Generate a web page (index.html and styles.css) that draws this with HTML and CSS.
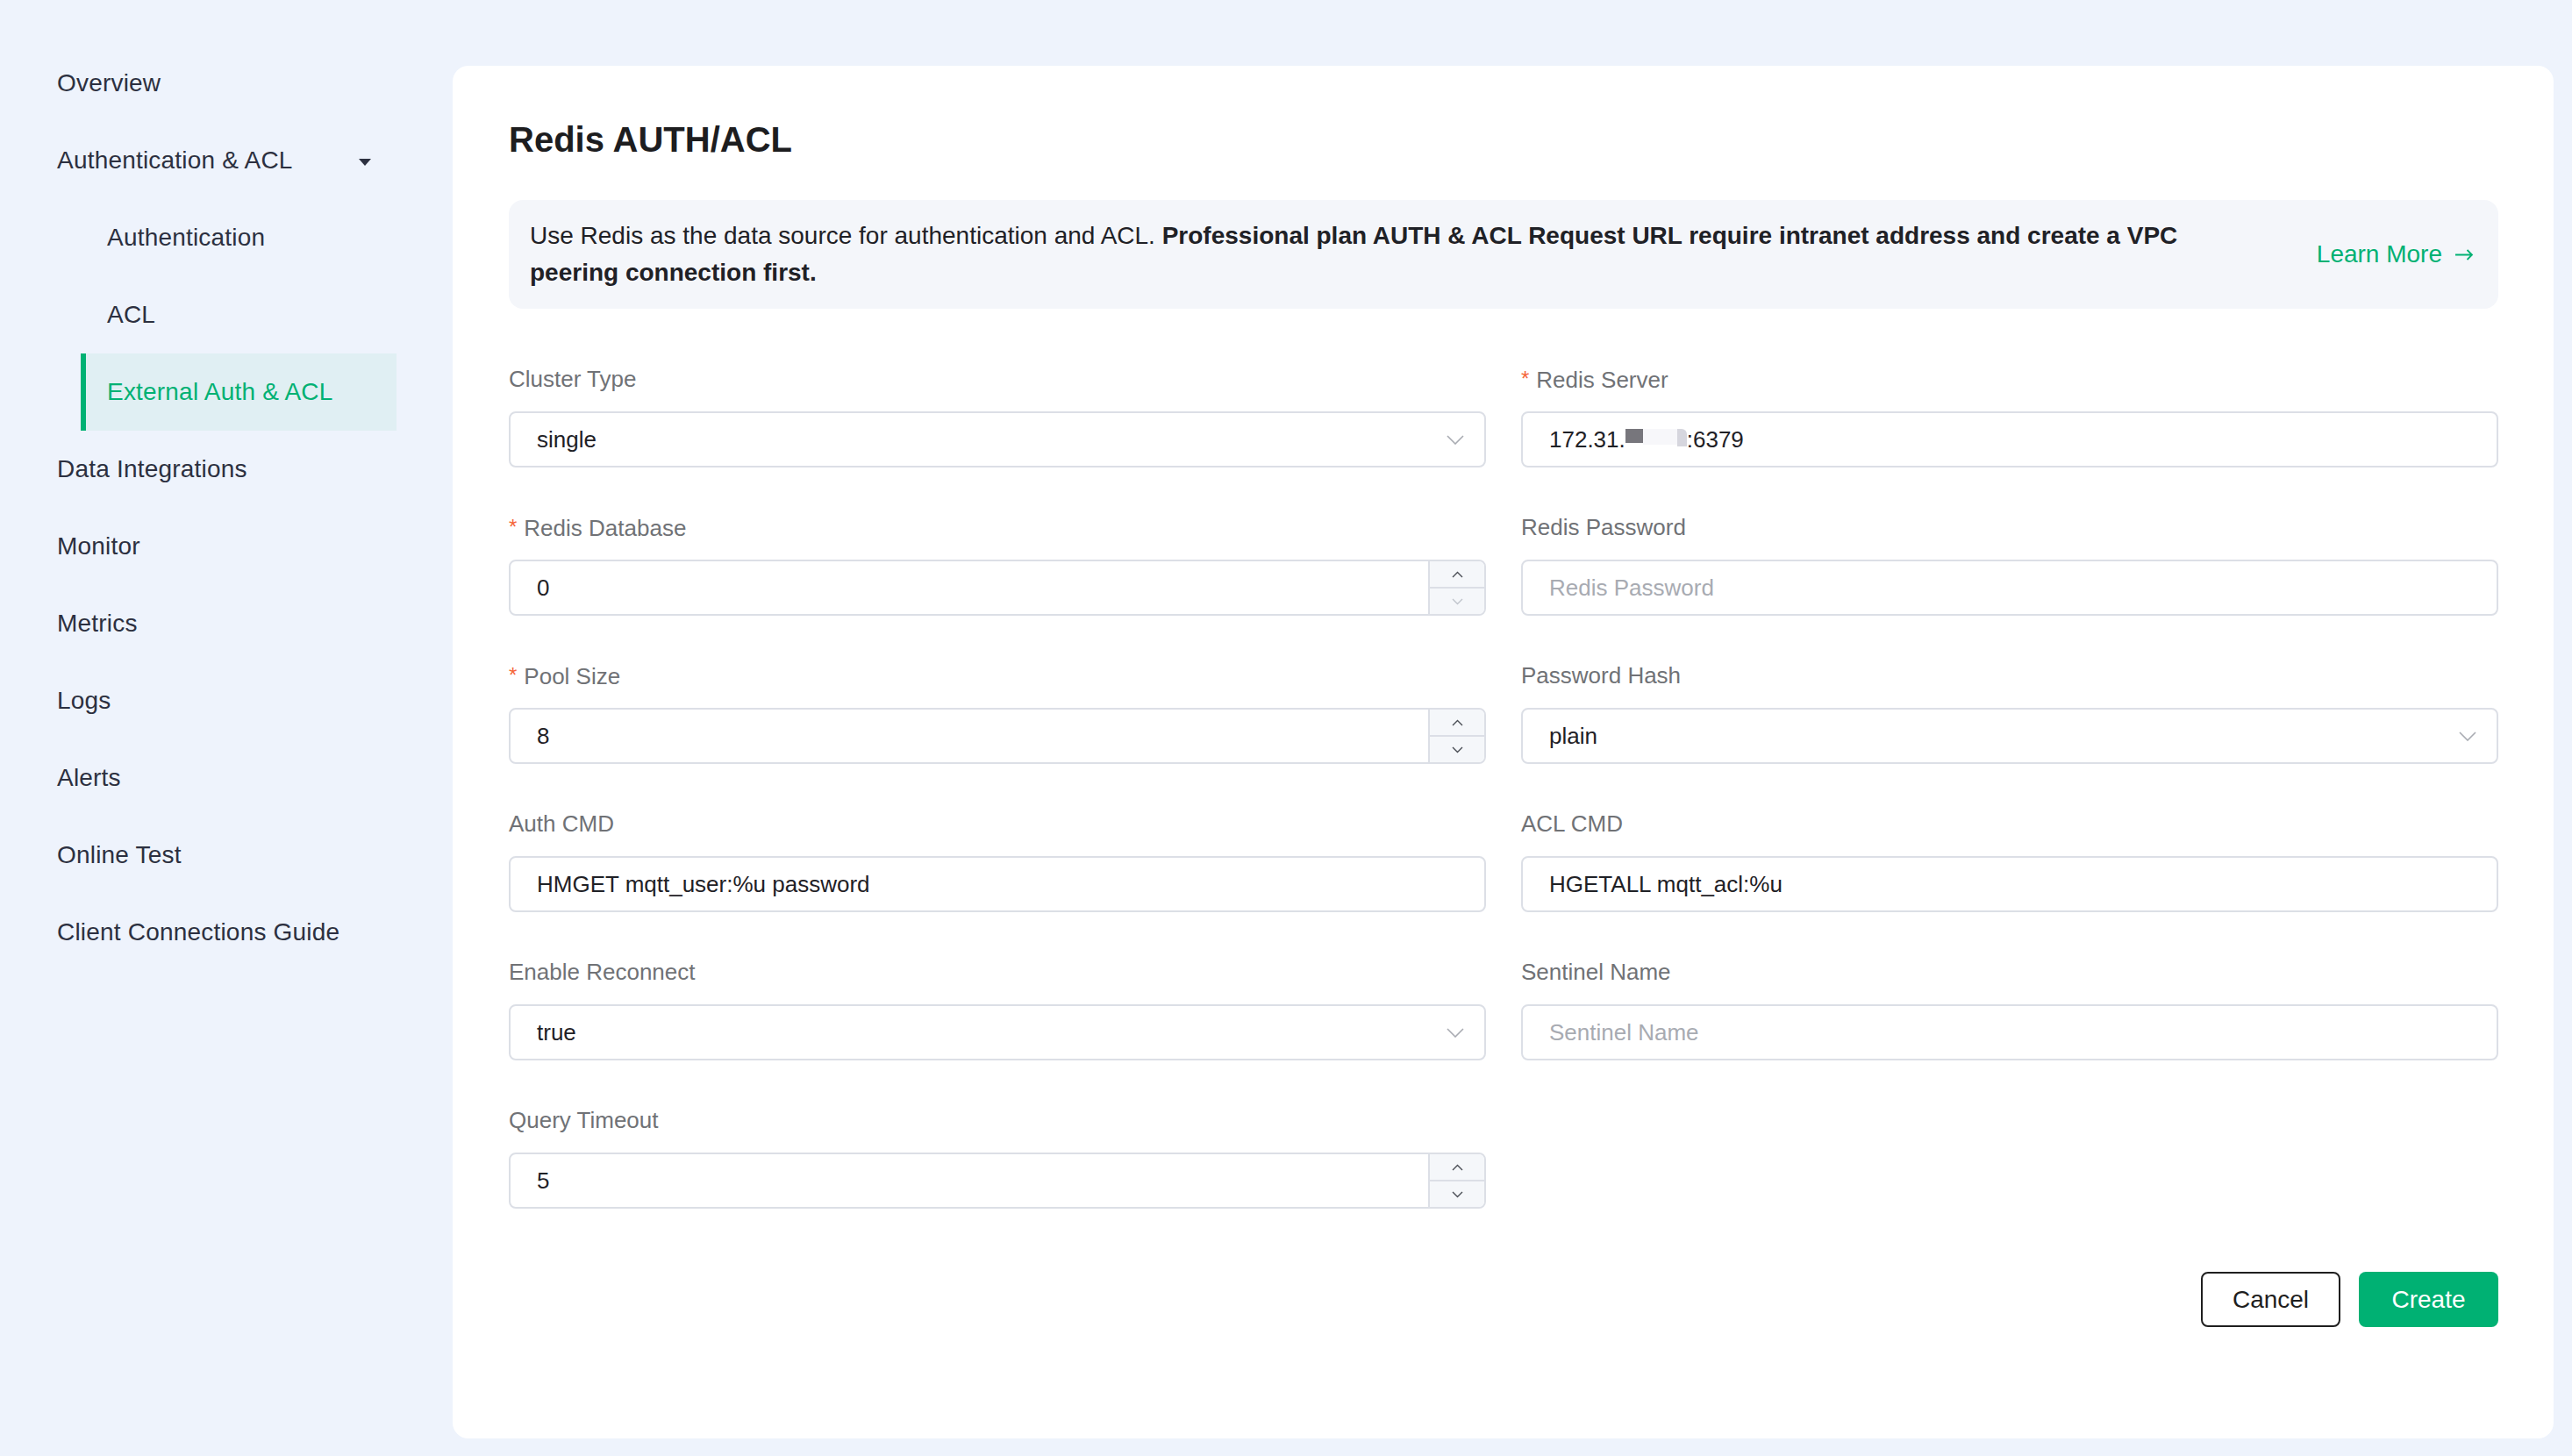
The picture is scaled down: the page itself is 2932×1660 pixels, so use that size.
FILE: index.html
```html
<!DOCTYPE html>
<html lang="en">
<head>
<meta charset="utf-8">
<title>Redis AUTH/ACL</title>
<link rel="stylesheet" href="styles.css">
</head>
<body>
<div class="layout">
  <aside class="sidebar">
    <nav class="nav">
      <div class="nav-item"><span>Overview</span></div>
      <div class="nav-item"><span>Authentication &amp; ACL</span>
        <svg class="caret" width="14" height="8" viewBox="0 0 14 8"><polygon points="0,0 14,0 7,8" fill="#2c3040"/></svg>
      </div>
      <div class="nav-sub"><span>Authentication</span></div>
      <div class="nav-sub"><span>ACL</span></div>
      <div class="nav-sub active"><span>External Auth &amp; ACL</span></div>
      <div class="nav-item"><span>Data Integrations</span></div>
      <div class="nav-item"><span>Monitor</span></div>
      <div class="nav-item"><span>Metrics</span></div>
      <div class="nav-item"><span>Logs</span></div>
      <div class="nav-item"><span>Alerts</span></div>
      <div class="nav-item"><span>Online Test</span></div>
      <div class="nav-item"><span>Client Connections Guide</span></div>
    </nav>
  </aside>
  <main class="main">
    <section class="card">
      <h1 class="title">Redis AUTH/ACL</h1>
      <div class="info">
        <p class="info-text">Use Redis as the data source for authentication and ACL. <b>Professional plan AUTH &amp; ACL Request URL require intranet address and create a VPC peering connection first.</b></p>
        <a class="learn">Learn More
          <svg width="22" height="20" viewBox="0 0 22 20"><path d="M1 10.5H20M14.5 5L20 10.5L14.5 16" fill="none" stroke="#00b173" stroke-width="1.8"/></svg>
        </a>
      </div>
      <div class="form">
        <div class="field">
          <label class="label">Cluster Type</label>
          <div class="input select"><span class="val">single</span>
            <svg class="chev" width="20" height="11" viewBox="0 0 20 11"><polyline points="1,1 10,10 19,1" fill="none" stroke="#a8abb2" stroke-width="1.6"/></svg>
          </div>
        </div>
        <div class="field">
          <label class="label"><span class="req">*</span>Redis Server</label>
          <div class="input"><span class="val">172.31.<span class="blur-dark"></span><span class="blur-light"></span><span class="blur-mid"></span>:6379</span></div>
        </div>
        <div class="field">
          <label class="label"><span class="req">*</span>Redis Database</label>
          <div class="input number"><span class="val">0</span>
            <div class="stepper">
              <div class="step"><svg width="13" height="8" viewBox="0 0 13 8"><polyline points="1,7 6.5,1.5 12,7" fill="none" stroke="#4a4d55" stroke-width="1.4"/></svg></div>
              <div class="step"><svg width="13" height="8" viewBox="0 0 13 8"><polyline points="1,1 6.5,6.5 12,1" fill="none" stroke="#c0c4cc" stroke-width="1.4"/></svg></div>
            </div>
          </div>
        </div>
        <div class="field">
          <label class="label">Redis Password</label>
          <div class="input"><span class="ph">Redis Password</span></div>
        </div>
        <div class="field">
          <label class="label"><span class="req">*</span>Pool Size</label>
          <div class="input number"><span class="val">8</span>
            <div class="stepper">
              <div class="step"><svg width="13" height="8" viewBox="0 0 13 8"><polyline points="1,7 6.5,1.5 12,7" fill="none" stroke="#4a4d55" stroke-width="1.4"/></svg></div>
              <div class="step"><svg width="13" height="8" viewBox="0 0 13 8"><polyline points="1,1 6.5,6.5 12,1" fill="none" stroke="#4a4d55" stroke-width="1.4"/></svg></div>
            </div>
          </div>
        </div>
        <div class="field">
          <label class="label">Password Hash</label>
          <div class="input select"><span class="val">plain</span>
            <svg class="chev" width="20" height="11" viewBox="0 0 20 11"><polyline points="1,1 10,10 19,1" fill="none" stroke="#a8abb2" stroke-width="1.6"/></svg>
          </div>
        </div>
        <div class="field">
          <label class="label">Auth CMD</label>
          <div class="input"><span class="val">HMGET mqtt_user:%u password</span></div>
        </div>
        <div class="field">
          <label class="label">ACL CMD</label>
          <div class="input"><span class="val">HGETALL mqtt_acl:%u</span></div>
        </div>
        <div class="field">
          <label class="label">Enable Reconnect</label>
          <div class="input select"><span class="val">true</span>
            <svg class="chev" width="20" height="11" viewBox="0 0 20 11"><polyline points="1,1 10,10 19,1" fill="none" stroke="#a8abb2" stroke-width="1.6"/></svg>
          </div>
        </div>
        <div class="field">
          <label class="label">Sentinel Name</label>
          <div class="input"><span class="ph">Sentinel Name</span></div>
        </div>
        <div class="field">
          <label class="label">Query Timeout</label>
          <div class="input number"><span class="val">5</span>
            <div class="stepper">
              <div class="step"><svg width="13" height="8" viewBox="0 0 13 8"><polyline points="1,7 6.5,1.5 12,7" fill="none" stroke="#4a4d55" stroke-width="1.4"/></svg></div>
              <div class="step"><svg width="13" height="8" viewBox="0 0 13 8"><polyline points="1,1 6.5,6.5 12,1" fill="none" stroke="#4a4d55" stroke-width="1.4"/></svg></div>
            </div>
          </div>
        </div>
      </div>
      <div class="actions">
        <button class="btn btn-cancel">Cancel</button>
        <button class="btn btn-create">Create</button>
      </div>
    </section>
  </main>
</div>
</body>
</html>
```

FILE: styles.css
```css
* { box-sizing: border-box; }
html, body {
  margin: 0;
  padding: 0;
}
body {
  width: 2932px;
  height: 1660px;
  overflow: hidden;
  background: #eef3fc;
  font-family: "Liberation Sans", Arial, Helvetica, sans-serif;
  color: #1f2126;
}
.layout {
  display: flex;
  height: 1660px;
}
.sidebar {
  width: 516px;
  flex-shrink: 0;
  padding-top: 51px;
}
.nav {
  width: 452px;
  display: flex;
  flex-direction: column;
}
.nav-item, .nav-sub {
  height: 88px;
  display: flex;
  align-items: center;
  font-size: 28px;
  letter-spacing: 0.2px;
  color: #2c3040;
}
.nav-item {
  padding: 0 29px 0 65px;
}
.caret {
  margin-left: auto;
  margin-top: 4px;
}
.nav-sub {
  margin-left: 92px;
  padding-left: 24px;
  border-left: 6px solid transparent;
}
.nav-sub.active {
  background: #e0eff3;
  border-left-color: #00b173;
  color: #00b173;
}
.main {
  flex: 1;
  padding: 75px 21px 20px 0;
}
.card {
  background: #ffffff;
  border-radius: 18px;
  height: 1565px;
  padding: 60px 63px 0 64px;
}
.title {
  margin: 0;
  font-size: 40px;
  line-height: 48px;
  font-weight: 700;
  color: #1d1d1f;
}
.info {
  margin-top: 45px;
  height: 124px;
  background: #f4f6fa;
  border-radius: 16px;
  padding: 0 28px 0 24px;
  display: flex;
  align-items: center;
  gap: 110px;
}
.info-text {
  flex: 1;
  margin: 0;
  font-size: 28px;
  line-height: 42px;
  color: #1f2126;
}
.info-text b { font-weight: 700; }
.learn {
  display: flex;
  align-items: center;
  gap: 14px;
  font-size: 28px;
  color: #00b173;
  white-space: nowrap;
}
.form {
  margin-top: 62px;
  display: grid;
  grid-template-columns: 1fr 1fr;
  column-gap: 40px;
  row-gap: 50px;
}
.field {
  display: flex;
  flex-direction: column;
}
.label {
  height: 36px;
  line-height: 36px;
  font-size: 26px;
  color: #707276;
  margin-bottom: 19px;
}
.req {
  color: #f5663a;
  font-size: 24px;
  margin-right: 8px;
  vertical-align: 2px;
}
.input {
  height: 64px;
  border: 2px solid #dcdfe6;
  border-radius: 8px;
  padding: 0 30px;
  display: flex;
  align-items: center;
  font-size: 26px;
  background: #ffffff;
}
.val { color: #1f2126; display: flex; align-items: center; }
.ph { color: #a8abb2; }
.select .chev {
  margin-left: auto;
  margin-right: -7px;
}
.number {
  padding-right: 0;
  overflow: hidden;
}
.number .val { flex: 1; }
.stepper {
  width: 64px;
  height: 100%;
  border-left: 2px solid #dcdfe6;
  background: #f5f7fa;
  display: flex;
  flex-direction: column;
}
.step {
  flex: 1;
  display: flex;
  align-items: center;
  justify-content: center;
}
.step + .step {
  border-top: 2px solid #dcdfe6;
}
.blur-dark {
  display: inline-block;
  width: 20px;
  height: 16px;
  background: #77767c;
  margin-top: -8px;
}
.blur-light {
  display: inline-block;
  width: 39px;
  height: 18px;
  background: #f7f7fa;
  margin-top: -6px;
}
.blur-mid {
  display: inline-block;
  width: 11px;
  height: 20px;
  background: #d6d6de;
  border-radius: 0 6px 0 0;
  margin-top: -4px;
}
.actions {
  margin-top: 72px;
  display: flex;
  justify-content: flex-end;
  gap: 21px;
}
.btn {
  width: 159px;
  height: 63px;
  border-radius: 8px;
  font-family: "Liberation Sans", Arial, sans-serif;
  font-size: 28px;
  cursor: pointer;
}
.btn-cancel {
  background: #ffffff;
  border: 2px solid #1f1f1f;
  color: #1f1f1f;
}
.btn-create {
  background: #00b173;
  border: none;
  color: #ffffff;
}
```
